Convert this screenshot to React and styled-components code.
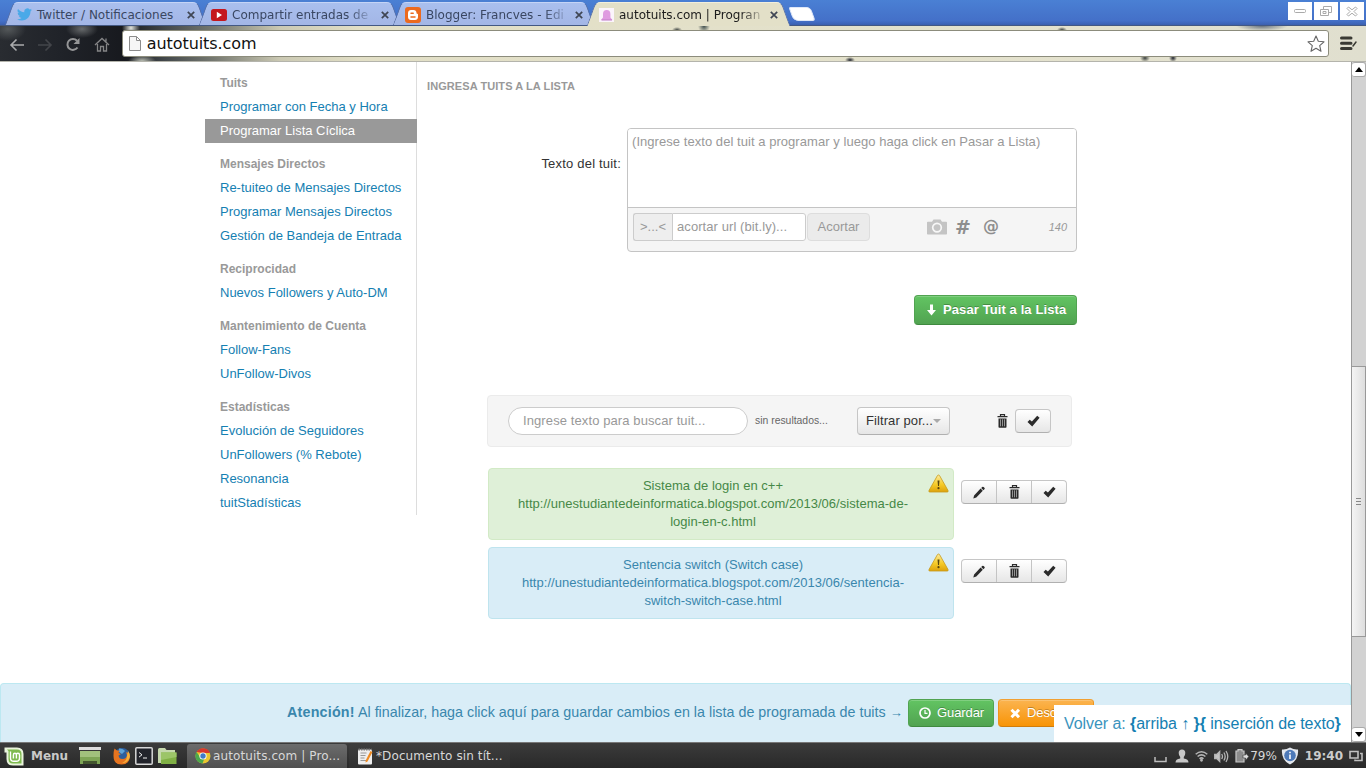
import React from 'react';
import styled, { createGlobalStyle, css } from 'styled-components';

const GlobalStyle = createGlobalStyle`
  * {
    box-sizing: border-box;
  }

  body {
    margin: 0;
    overflow: hidden;
    background: #fff;
    font-family: "Liberation Sans", Arial, sans-serif;
    font-size: 13px;
    line-height: 18px;
    color: #333;
  }

  svg {
    display: block;
    flex: none;
  }
`;

const Screen = styled.div`
  width: 1366px;
  height: 768px;
  display: flex;
  flex-direction: column;
  overflow: hidden;
`;

/* ---------- browser window ---------- */

const TabStrip = styled.div`
  flex: none;
  height: 26px;
  display: flex;
  align-items: flex-start;
  padding: 2px 0 0 8px;
  background: linear-gradient(#4a80d4, #4470c8 80%, #3c62b4 94%, #46546c);
  font-family: "DejaVu Sans", sans-serif;
`;

const Tab = styled.div`
  position: relative;
  isolation: isolate;
  flex: none;
  width: ${(p) => p.$width || 194}px;
  height: 24px;
  display: flex;
  align-items: center;
  padding: 1px 7px 0 9px;
  font-size: 12px;
  color: ${(p) => (p.$active ? '#1c1c1c' : '#3a4762')};
  z-index: ${(p) => (p.$active ? 3 : 1)};

  &:before,
  &:after {
    content: '';
    position: absolute;
    z-index: -1;
    top: 0;
    bottom: ${(p) => (p.$active ? 0 : 1)}px;
    background: ${(p) => (p.$active ? '#e3e0c8' : 'linear-gradient(#a9bfee, #a3b6e6)')};
    border-top: 1px solid ${(p) => (p.$active ? '#f2efdc' : '#c4d4f6')};
  }

  &:before {
    left: 1px;
    right: 30%;
    border-left: 1px solid #5a70a4;
    border-top-left-radius: 5px;
    transform: skewX(-20deg);
  }

  &:after {
    left: 30%;
    right: 0;
    border-right: 1px solid #5a70a4;
    border-top-right-radius: 5px;
    transform: skewX(20deg);
  }
`;

const TabTitle = styled.span`
  flex: none;
  margin: 0 auto 0 5px;
  white-space: nowrap;
  mask-image: ${(p) => (p.$fade ? 'linear-gradient(90deg, #000 86%, rgba(0, 0, 0, 0.25))' : 'none')};
`;

const NewTab = styled.div`
  width: 22px;
  height: 14px;
  margin: 5px 0 0 6px;
  background: #fff;
  border: 1px solid #dfe8f8;
  border-radius: 2px 4px 3px 5px;
  transform: skewX(20deg);
`;

const WindowButtons = styled.div`
  display: flex;
  gap: 2px;
  margin-left: auto;
  padding-right: 2px;
`;

const WindowButton = styled.div`
  width: 24px;
  height: 18px;
  display: flex;
  align-items: center;
  justify-content: center;
  background: #fff;
`;

const Toolbar = styled.div`
  flex: none;
  height: 36px;
  display: flex;
  align-items: center;
  padding: 0 7px 0 9px;
  border-bottom: 1px solid #b4b4ac;
  background:
    radial-gradient(ellipse 16px 9px at 82px 3px, #66696b, transparent),
    radial-gradient(ellipse 18px 12px at 8px 3px, #54585a, transparent),
    radial-gradient(ellipse 9px 8px at 131px 2px, #e3e5df, transparent),
    radial-gradient(ellipse 14px 6px at 142px 35px, #b9bdb2, transparent),
    radial-gradient(ellipse 26px 5px at 1262px 0, #67727e, transparent),
    radial-gradient(ellipse 6px 7px at 704px 0, #3e4c4c, transparent),
    radial-gradient(ellipse 5px 3px at 677px 4px, #3b4140, transparent),
    radial-gradient(ellipse 5px 3px at 1062px 4px, #3b4140, transparent),
    radial-gradient(ellipse 5px 3px at 850px 34px, #20242e, transparent),
    radial-gradient(ellipse 5px 4px at 1145px 32px, #3b4140, transparent),
    radial-gradient(ellipse 4px 4px at 1173px 32px, #20242e, transparent),
    linear-gradient(90deg, #292c31 0, #202329 60px, #17191e 125px, #43484b 165px, #777a72 215px, #cbc9b3 280px, #e2dfc6 360px, #e4e2ce 1100px, #e0dfcf 1366px);
`;

const NavButton = styled.div`
  width: 28px;
  display: flex;
  padding-top: 2px;
  margin-right: ${(p) => p.$gap || 0}px;
  opacity: ${(p) => (p.$dim ? 0.18 : 0.75)};
`;

const AddressBar = styled.div`
  width: 1209px;
  height: 27px;
  display: flex;
  align-items: center;
  padding: 0 3px 0 6px;
  background: #fff;
  border: 1px solid #8c8c7c;
  border-radius: 3px;
  font: 16px/24px "DejaVu Sans", sans-serif;
  letter-spacing: -0.08px;
  color: #111;
`;

const Url = styled.span`
  flex: 1;
  margin-left: 6px;
`;

const Burger = styled.div`
  margin-left: 10px;
`;

/* ---------- page ---------- */

const Viewport = styled.div`
  position: relative;
  flex: none;
  height: 680px;
  display: flex;
  background: #fff;
`;

const Page = styled.div`
  width: 1351px;
  display: flex;
  flex-direction: column;
`;

const Columns = styled.div`
  flex: 1;
  display: flex;
  align-items: flex-start;
  padding-left: 205px;
`;

const Sidebar = styled.nav`
  width: 212px;
  flex: none;
  padding-top: 9px;
  border-right: 1px solid #ddd;
`;

const NavGroup = styled.div`
  & + & {
    margin-top: 9px;
  }
`;

const NavHeader = styled.div`
  padding: 3px 15px;
  font-size: 12px;
  font-weight: bold;
  color: #999;
`;

const NavLink = styled.a`
  display: block;
  padding: 3px 15px;
  color: #1580b2;
  white-space: nowrap;

  ${(p) =>
    p.$active &&
    css`
      margin-right: -1px;
      background: #999;
      color: #fff;
    `}
`;

const Main = styled.main`
  width: 660px;
  padding: 15px 0 0 10px;
`;

const SectionTitle = styled.h6`
  margin: 0;
  font-size: 11px;
  line-height: 18px;
  font-weight: bold;
  letter-spacing: 0.08px;
  color: #999;
  text-transform: uppercase;
`;

const FormRow = styled.div`
  display: flex;
  margin-top: 33px;
`;

const Label = styled.label`
  width: 194px;
  margin-right: 6px;
  padding-top: 27px;
  text-align: right;
  letter-spacing: 0.2px;
`;

const Composer = styled.div`
  width: 450px;
  height: 124px;
  border: 1px solid #c4c4c4;
  border-radius: 4px;
  background: #f5f5f5;
  overflow: hidden;
`;

const TweetText = styled.div`
  height: 79px;
  padding: 4px;
  background: #fff;
  border-bottom: 1px solid #c4c4c4;
  color: #999;
  letter-spacing: 0.05px;
`;

const ComposerTools = styled.div`
  display: flex;
  align-items: center;
  padding: 5px 9px 0 5px;
  color: #999;
`;

const AddOn = styled.span`
  width: 39px;
  height: 28px;
  padding: 4px 5px;
  border: 1px solid #ccc;
  border-right: 0;
  border-radius: 3px 0 0 3px;
  background: #eee;
  text-align: center;
`;

const UrlInput = styled.span`
  width: 134px;
  height: 28px;
  padding: 4px;
  border: 1px solid #ccc;
  border-radius: 0 3px 3px 0;
  background: #fff;
  letter-spacing: 0.08px;
`;

const DisabledButton = styled.span`
  width: 63px;
  height: 28px;
  margin-left: 1px;
  padding: 4px 0;
  border: 1px solid #ddd;
  border-radius: 4px;
  background: #ebebeb;
  text-align: center;
`;

const ToolIcons = styled.div`
  display: flex;
  align-items: center;
  margin-left: 57px;
`;

const ToolGlyph = styled.b`
  margin-left: ${(p) => p.$gap}px;
  font: bold ${(p) => p.$size}px/20px "DejaVu Sans", sans-serif;
  color: #8e8e8e;
`;

const Counter = styled.em`
  margin-left: auto;
  font-size: 11px;
`;

const buttonColors = {
  green: css`
    background: linear-gradient(#62c462, #51a351);
    border-color: #51a351 #51a351 #3f8a3f;
  `,
  orange: css`
    background: linear-gradient(#fbb450, #f89406);
    border-color: #f0a033 #f0941a #d07d0c;
  `,
};

const Button = styled.button`
  flex: none;
  display: flex;
  align-items: center;
  width: ${(p) => p.$width}px;
  height: ${(p) => p.$height || 28}px;
  gap: ${(p) => p.$gap || 6}px;
  padding: 0 ${(p) => p.$pad || 10}px;
  border: 1px solid;
  border-radius: 4px;
  font: ${(p) => (p.$bold ? 'bold' : 'normal')} 13px/18px "Liberation Sans", Arial, sans-serif;
  letter-spacing: ${(p) => (p.$bold ? 0.1 : -0.1)}px;
  color: #fff;
  white-space: nowrap;
  text-shadow: 0 -1px 0 rgba(0, 0, 0, 0.25);
  box-shadow: inset 0 1px 0 rgba(255, 255, 255, 0.2);
  ${(p) => buttonColors[p.$color]}
`;

const SubmitRow = styled.div`
  display: flex;
  justify-content: flex-end;
  margin-top: 43px;
`;

const FilterBar = styled.div`
  width: 585px;
  height: 52px;
  display: flex;
  align-items: center;
  margin: 70px 0 0 60px;
  padding: 0 20px;
  border: 1px solid #ebebeb;
  border-radius: 4px;
  background: #f5f5f5;
`;

const SearchInput = styled.div`
  width: 240px;
  height: 28px;
  padding: 4px 14px;
  border: 1px solid #ccc;
  border-radius: 14px;
  background: #fff;
  color: #999;
  letter-spacing: 0.1px;
`;

const ResultNote = styled.small`
  width: 109px;
  padding-left: 7px;
  font-size: 10.4px;
  color: #666;
`;

const lightButton = css`
  display: flex;
  align-items: center;
  justify-content: center;
  border: 1px solid #c6c6c6;
  border-bottom-color: #b0b0b0;
  border-radius: 4px;
  background: linear-gradient(#fff, #e6e6e6);
`;

const FilterSelect = styled.div`
  ${lightButton}
  width: 93px;
  height: 28px;
  letter-spacing: 0.08px;
`;

const Caret = styled.i`
  border: 4px solid transparent;
  border-top-color: #aaa;
  border-bottom: 0;
`;

const BulkActions = styled.div`
  display: flex;
  align-items: center;
  gap: 7px;
  margin-left: auto;
`;

const CheckButton = styled.div`
  ${lightButton}
  width: 36px;
  height: 24px;
`;

const TweetList = styled.div`
  display: flex;
  flex-direction: column;
  gap: 7px;
  margin: 21px 0 0 61px;
`;

const TweetRow = styled.div`
  display: flex;
  align-items: flex-start;
`;

const TweetCard = styled.div`
  position: relative;
  width: 466px;
  height: 72px;
  padding: 8px 35px 8px 19px;
  border: 1px solid ${(p) => (p.$tone === 'success' ? '#d2eac6' : '#bfe4ee')};
  border-radius: 4px;
  background: ${(p) => (p.$tone === 'success' ? '#dff0d8' : '#d9edf7')};
  color: ${(p) => (p.$tone === 'success' ? '#468847' : '#3a87ad')};
  text-align: center;
  white-space: pre;
  letter-spacing: 0.03px;
`;

const WarningBadge = styled.span`
  position: absolute;
  top: 5px;
  right: 4px;
`;

const RowActions = styled.div`
  ${lightButton}
  width: 106px;
  height: 24px;
  margin: 12px 0 0 7px;
`;

const RowAction = styled.span`
  flex: 1;
  height: 22px;
  display: flex;
  align-items: center;
  justify-content: center;

  & + & {
    border-left: 1px solid #c4c4c4;
  }
`;

const SaveBar = styled.div`
  flex: none;
  height: 59px;
  display: flex;
  align-items: center;
  padding-left: 286px;
  border: 1px solid #bce8f1;
  border-bottom: 0;
  border-radius: 4px 4px 0 0;
  background: #d9edf7;
  color: #3a87ad;
`;

const SaveText = styled.span`
  width: 621px;
  padding-bottom: 2px;
  font-size: 14.3px;
  letter-spacing: 0.01px;
  white-space: nowrap;

  b {
    letter-spacing: 0.2px;
  }

  small {
    font-size: 13px;
  }
`;

const SaveActions = styled.div`
  display: flex;
  gap: 4px;
`;

const BackLinks = styled.div`
  position: absolute;
  right: 15px;
  bottom: 0;
  width: 297px;
  height: 37px;
  padding-left: 10px;
  background: #fff;
  font-size: 16px;
  line-height: 37px;
  letter-spacing: -0.06px;
  color: #3a93bd;
  white-space: nowrap;

  a {
    color: #1580b2;
  }
`;

const Scrollbar = styled.div`
  width: 15px;
  display: flex;
  flex-direction: column;
  background: #d2d2d2;
  border-left: 1px solid #999;
`;

const ScrollButton = styled.div`
  height: 15px;
  display: flex;
  align-items: center;
  justify-content: center;
  border: 1px solid #aaa;
  border-left: 0;
  border-radius: 3px;
  background: #fff;
`;

const ScrollThumb = styled.div`
  height: 271px;
  margin: 289px 0 auto;
  display: flex;
  flex-direction: column;
  justify-content: center;
  align-items: center;
  gap: 2px;
  border: 1px solid #999;
  border-left: 0;
  background: linear-gradient(90deg, #f4f4f4, #dedede);

  i {
    width: 5px;
    height: 1px;
    background: #888;
  }
`;

/* ---------- desktop panel ---------- */

const Panel = styled.div`
  flex: 1;
  display: flex;
  align-items: center;
  padding: 1px 3px 0 4px;
  border-top: 1px solid #777;
  background: linear-gradient(#3b3b3b, #292929);
  font: 12px/24px "DejaVu Sans", sans-serif;
  color: #d8d8d8;
`;

const MenuLabel = styled.b`
  width: 48px;
  margin-left: 7px;
  font-size: 12px;
  color: #c9c9c9;
`;

const Launchers = styled.div`
  display: flex;
  align-items: center;
  gap: 4px;
  margin-left: 12px;
`;

const Task = styled.div`
  width: ${(p) => p.$width}px;
  height: 24px;
  display: flex;
  align-items: center;
  gap: 2px;
  padding-left: ${(p) => p.$pad}px;
  margin-left: ${(p) => p.$gap}px;
  border-radius: 3px 3px 0 0;
  white-space: nowrap;
  letter-spacing: 0.1px;
  background: ${(p) => (p.$active ? 'linear-gradient(#6c6c6c, #505050)' : 'linear-gradient(#3d3d3d, #303030)')};
`;

const Tray = styled.div`
  display: flex;
  align-items: center;
  margin-left: auto;
  gap: 6px;
`;

const Battery = styled.div`
  display: flex;
  align-items: center;
  gap: 1px;
  margin-right: -2px;
`;

const Clock = styled.b`
  font-size: 12px;
  color: #ccc;
`;

/* ---------- icons ---------- */

const CloseX = () => (
  <svg width="8" height="8" viewBox="0 0 8 8" stroke="#3f4654" strokeWidth="1.7">
    <path d="M0.8 0.8l6.4 6.4M7.2 0.8L0.8 7.2" />
  </svg>
);

const TwitterIcon = () => (
  <svg width="15" height="15" viewBox="0 0 24 24" fill="#4aa9e8">
    <path d="M23.95 4.57a10 10 0 0 1-2.82.77 4.96 4.96 0 0 0 2.16-2.72c-.95.55-2 .95-3.13 1.18a4.92 4.92 0 0 0-8.38 4.48C7.69 8.1 4.07 6.13 1.64 3.16a4.9 4.9 0 0 0 1.52 6.57 4.9 4.9 0 0 1-2.23-.61v.06a4.92 4.92 0 0 0 3.95 4.83 5 5 0 0 1-2.21.08 4.94 4.94 0 0 0 4.6 3.42A9.87 9.87 0 0 1 0 19.54a13.99 13.99 0 0 0 7.55 2.21c9.05 0 14-7.5 14-13.98 0-.21 0-.42-.02-.63a9.94 9.94 0 0 0 2.42-2.57z" />
  </svg>
);

const YoutubeIcon = () => (
  <svg width="16" height="12" viewBox="0 0 16 12">
    <rect width="16" height="12" rx="2.5" fill="#c4171d" />
    <path d="M5.8 2.8v6.4L11 6z" fill="#fff" />
  </svg>
);

const BloggerIcon = () => (
  <svg width="16" height="16" viewBox="0 0 16 16">
    <rect width="16" height="16" rx="3" fill="#ec6a1e" />
    <path
      d="M6 3h2.5C10.3 3 11.5 4.2 11.5 5.7c0 .8.3 1 .8 1 .5 0 .7.3.7.8V10c0 1.7-1.3 3-3 3H6c-1.7 0-3-1.3-3-3V6c0-1.7 1.3-3 3-3z"
      fill="#fff"
    />
    <path d="M6 6.200h2.200M6 9.900h4" stroke="#ec6a1e" strokeWidth="1.5" strokeLinecap="round" />
  </svg>
);

const AutotuitsIcon = () => (
  <svg width="15" height="14" viewBox="0 0 15 14">
    <rect width="15" height="14" fill="#fbf4fb" />
    <path d="M4 9.500V6a3.700 4 0 0 1 7.400 0V9.500l2 2.500H2z" fill="#df9be0" />
    <path d="M2.500 12h10.500" stroke="#c07cc8" />
  </svg>
);

const BackIcon = () => (
  <svg width="16" height="14" viewBox="0 0 16 14" fill="none" stroke="#d6d6d6" strokeWidth="1.6">
    <path d="M15 7H2.500M7.500 1.500L2 7l5.500 5.500" />
  </svg>
);

const ForwardIcon = () => (
  <svg width="16" height="14" viewBox="0 0 16 14" fill="none" stroke="#d6d6d6" strokeWidth="1.6">
    <path d="M1 7h12.500M8.500 1.500L14 7l-5.500 5.500" />
  </svg>
);

const ReloadIcon = () => (
  <svg width="16" height="15" viewBox="0 0 16 15" fill="none" stroke="#bcbcbc" strokeWidth="2">
    <path d="M12.500 10.500A5.500 5.500 0 1 1 12 3.700" />
    <path d="M14.500 1v6H8.500z" fill="#bcbcbc" stroke="none" />
  </svg>
);

const HomeIcon = () => (
  <svg width="16" height="15" viewBox="0 0 16 15" fill="none" stroke="#a8a8a8" strokeWidth="1.3">
    <path d="M1 8l7-6.500L15 8M3.500 7v7h3V9.500h3V14h3V7M12 4.500V1.500" />
  </svg>
);

const PageIcon = () => (
  <svg width="12" height="15" viewBox="0 0 12 15" fill="#f6f6f6" stroke="#8c8c8c">
    <path d="M0.500 0.500h7l4 4v10h-11zM7.500 0.500v4h4" />
  </svg>
);

const StarIcon = () => (
  <svg width="18" height="18" viewBox="0 0 18 18" fill="#fff" stroke="#666" strokeWidth="1.1" strokeLinejoin="round">
    <path d="M9 1l2.300 5.300 5.700.5-4.300 3.800 1.300 5.700L9 13.300l-5 3 1.300-5.700L1 6.800l5.700-.5z" />
  </svg>
);

const TrashIcon = () => (
  <svg width="11" height="14" viewBox="0 0 11 14">
    <path d="M3.500 2.500V0.600h4v1.900M0.500 2.700h10" fill="none" stroke="#2b2b2b" strokeWidth="1.2" />
    <path d="M1.500 4.500h8V13q0 .7-.7.700H2.200q-.7 0-.7-.700z" fill="#2b2b2b" />
    <path d="M3.500 5.300v7M5.500 5.300v7M7.500 5.300v7" stroke="#b0b0b0" strokeWidth="0.800" />
  </svg>
);

const PencilIcon = () => (
  <svg width="12" height="13" viewBox="0 0 12 13" fill="#2b2b2b">
    <path d="M0.300 12.600l.8-3.200L7.600 2.600l2.200 2.200-6.500 6.700zM8.200 2l1-1q.7-.7 1.400 0l.8.800q.7.700 0 1.400l-1 1z" />
  </svg>
);

const CheckIcon = () => (
  <svg width="13" height="12" viewBox="0 0 13 12" fill="#2b2b2b">
    <path d="M0.500 7l2.200-2.300 2.200 1.900L10.200 0.700l2.400 2L5.200 11.500z" />
  </svg>
);

const WarningIcon = () => (
  <svg width="21" height="19" viewBox="0 0 21 19">
    <defs>
      <linearGradient id="warn" x1="0" y1="0" x2="0" y2="1">
        <stop offset="0" stopColor="#fbeaa0" />
        <stop offset="0.55" stopColor="#f6cb28" />
        <stop offset="1" stopColor="#dda20c" />
      </linearGradient>
    </defs>
    <path d="M10.500 1q.8 0 1.300 1L20 16.500q.6 1.500-.8 1.500H1.800Q.4 18 1 16.500L9.200 2q.5-1 1.300-1z" fill="url(#warn)" stroke="#c79a1c" strokeWidth="0.8" />
    <path d="M9.500 6.500h2l-.5 5.500h-1z" fill="#5a460c" />
    <circle cx="10.5" cy="14.2" r="1.1" fill="#5a460c" />
  </svg>
);

const CameraIcon = () => (
  <svg width="20" height="16" viewBox="0 0 20 16">
    <path d="M0.800 2.700H5L6.500 0.500h7L15 2.700h4.200q.8 0 .8.800v11.200q0 .8-.8.800H.8q-.8 0-.8-.8V3.500q0-.8.8-.8z" fill="#c4c4c4" />
    <circle cx="10" cy="8.600" r="4.300" fill="#c4c4c4" stroke="#f7f7f7" strokeWidth="1.7" />
  </svg>
);

const ArrowDownIcon = () => (
  <svg width="9" height="12" viewBox="0 0 9 12" fill="#fff">
    <path d="M3 0.500h3V6h3L4.500 11.500 0 6h3z" />
  </svg>
);

const ClockIcon = () => (
  <svg width="12" height="12" viewBox="0 0 12 12" fill="none" stroke="#fff">
    <circle cx="6" cy="6" r="5" strokeWidth="1.7" />
    <path d="M6 3v3.300h2.500" strokeWidth="1.2" />
  </svg>
);

const RemoveIcon = () => (
  <svg width="12" height="11" viewBox="0 0 12 11" stroke="#fff" strokeWidth="3">
    <path d="M2.500 1.700l7.500 7.600M10 1.700L2.500 9.300" />
  </svg>
);

const MintIcon = () => (
  <svg width="20" height="19" viewBox="0 0 20 19">
    <path d="M0.500 0.500H13Q19.500 0.500 19.500 7v11.500H9Q2.500 18.500 2.500 12V5.500h-2z" fill="#e9f4dc" />
    <path d="M3 2.500h10q4.500 0 4.500 4.500v9.500H9q-4.500 0-4.500-4.500V4z" fill="#7fba4f" />
    <path d="M6.500 4.500V11q0 3.300 3.300 3.300h2.400q3.300 0 3.300-3.300V8q0-1.700-1.600-1.700T12.400 8v3.500M12.400 8q0-1.700-1.500-1.700T9.400 8v3.500" fill="none" stroke="#fff" strokeWidth="1.4" />
  </svg>
);

const DesktopIcon = () => (
  <svg width="22" height="18" viewBox="0 0 22 18">
    <rect width="22" height="3" fill="#ddd" />
    <rect x="1" y="4" width="20" height="13" fill="#7ea555" />
    <rect x="1" y="4" width="20" height="6" fill="#a1c17c" />
    <path d="M4 17v-3h14v3" fill="#44562f" />
  </svg>
);

const FirefoxIcon = () => (
  <svg width="18" height="18" viewBox="0 0 18 18">
    <circle cx="9" cy="9" r="8" fill="#2d5f9e" />
    <path d="M6 1.500q4-.5 6 2.500l-3 3-3-2z" fill="#5da3d8" />
    <path d="M1.500 1.500l2.500 2 2.500 0-1 2.500 2.500 1-2.500 1.500Q6 12 9.500 12q4 0 4.500-4l-1-3q3 1 4 4-.5 8.500-8.500 8.500T.5 9Q.5 4 1.500 1.500z" fill="#e6741f" />
    <path d="M15 4q2 2 1.800 6Q15 16 9 16q5-2 5-7z" fill="#f4b13a" />
  </svg>
);

const TerminalIcon = () => (
  <svg width="18" height="18" viewBox="0 0 18 18">
    <rect x="0.8" y="0.8" width="16.4" height="16.4" rx="1" fill="#22242b" stroke="#d8d8d8" strokeWidth="1.5" />
    <path d="M4 5.500l3 2.300-3 2.300M8 11h4" fill="none" stroke="#eee" />
  </svg>
);

const FolderIcon = () => (
  <svg width="20" height="18" viewBox="0 0 20 18">
    <path d="M1 16V2.500Q1 1 2.500 1H8l1.500 2H18v13z" fill="#c5d8ad" />
    <path d="M4 5.500h15.500V17H4z" fill="#80b045" />
    <path d="M4 5.500h15.500V10L4 13z" fill="#9cc568" />
  </svg>
);

const ChromeIcon = () => (
  <svg width="16" height="16" viewBox="0 0 16 16">
    <circle cx="8" cy="8" r="7.500" fill="#e9c52f" />
    <path d="M1.500 4A7.500 7.500 0 0 1 15 5H8z" fill="#d8382c" />
    <path d="M1.500 4A7.500 7.500 0 0 0 7.500 15.500L9.500 10 5 9z" fill="#4ba84c" />
    <circle cx="8" cy="8" r="3.600" fill="#fff" />
    <circle cx="8" cy="8" r="2.700" fill="#3f7bc8" />
  </svg>
);

const EditorIcon = () => (
  <svg width="17" height="17" viewBox="0 0 17 17">
    <rect x="1" y="1.500" width="14" height="15" rx="1" fill="#eee" />
    <path d="M1.500 1.500h13" stroke="#777" strokeWidth="2" strokeDasharray="1.500 1" />
    <path d="M3.500 5h6M3.500 7.500h5M3.500 10h4M3.500 12.500h6" stroke="#999" />
    <path d="M13.500 3l2 1-5 9.500-2 1 .3-2.300z" fill="#ee8a22" />
  </svg>
);

const KeyboardTrayIcon = () => (
  <svg width="15" height="13" viewBox="0 0 15 13" fill="none" stroke="#bdbdbd" strokeWidth="1.5">
    <path d="M1 7v4.500h11V7" />
  </svg>
);

const UserIcon = () => (
  <svg width="14" height="14" viewBox="0 0 14 14" fill="#c8c8c8">
    <path d="M7 0.500q3.300 0 3.300 3.500 0 2.500-1.500 4v1.500q4.700.7 4.700 4H.5q0-3.300 4.700-4V8Q3.700 6.500 3.700 4 3.700 0.500 7 0.500z" />
  </svg>
);

const WifiIcon = () => (
  <svg width="13" height="12" viewBox="0 0 13 12" fill="none" stroke="#b5b5b5" strokeWidth="1.5">
    <path d="M0.700 4.200q5.800-5 11.600 0M2.600 6.500q3.900-3.300 7.800 0M4.500 8.700q2-1.700 4 0" />
    <circle cx="6.500" cy="10.300" r="0.700" />
  </svg>
);

const VolumeIcon = () => (
  <svg width="15" height="13" viewBox="0 0 15 13" fill="none" stroke="#b5b5b5" strokeWidth="1.3">
    <path d="M0.700 4.500h2l3-3v10l-3-3h-2z" fill="#c4c4c4" />
    <path d="M7.700 4q1.500 2.500 0 5M9.900 2.500q2.500 4 0 8M12 1q3.500 5.500 0 11" />
  </svg>
);

const BatteryIcon = () => (
  <svg width="14" height="14" viewBox="0 0 14 14">
    <path d="M3 2V0.700h4V2h2v11H1V2z" fill="#8c8c8c" stroke="#c8c8c8" strokeWidth="1.2" />
    <path d="M10.500 4v2H8v3h2.500v2.500L13.800 7.500z" fill="#ddd" stroke="#333" strokeWidth="0.6" />
  </svg>
);

const ShieldIcon = () => (
  <svg width="18" height="18" viewBox="0 0 18 18">
    <path d="M9 0.500q4 2.500 8 2Q18 13 9 17.500 0 13 1 2.500q4 .5 8-2z" fill="#e4e8ee" />
    <circle cx="9" cy="8.500" r="5.800" fill="#4d79b8" />
    <path d="M9 7.500V12M9 4.700v1.500" stroke="#fff" strokeWidth="1.6" />
  </svg>
);

const WindowsIcon = () => (
  <svg width="14" height="12" viewBox="0 0 14 12" fill="none" stroke="#c0c0c0" strokeWidth="1.6">
    <path d="M1 1.500h8v6.500H1zM11 3.500h2v7H6V9.500" />
  </svg>
);

const navGroups = [
  { title: 'Tuits', links: ['Programar con Fecha y Hora', 'Programar Lista Cíclica'] },
  {
    title: 'Mensajes Directos',
    links: ['Re-tuiteo de Mensajes Directos', 'Programar Mensajes Directos', 'Gestión de Bandeja de Entrada'],
  },
  { title: 'Reciprocidad', links: ['Nuevos Followers y Auto-DM'] },
  { title: 'Mantenimiento de Cuenta', links: ['Follow-Fans', 'UnFollow-Divos'] },
  {
    title: 'Estadísticas',
    links: ['Evolución de Seguidores', 'UnFollowers (% Rebote)', 'Resonancia', 'tuitStadísticas'],
  },
];

const tweets = [
  {
    tone: 'success',
    text: 'Sistema de login en c++\nhttp://unestudiantedeinformatica.blogspot.com/2013/06/sistema-de-\nlogin-en-c.html',
  },
  {
    tone: 'info',
    text: 'Sentencia switch (Switch case)\nhttp://unestudiantedeinformatica.blogspot.com/2013/06/sentencia-\nswitch-switch-case.html',
  },
];

const BrowserTabs = () => (
  <TabStrip>
    <Tab>
      <TwitterIcon />
      <TabTitle>Twitter / Notificaciones</TabTitle>
      <CloseX />
    </Tab>
    <Tab>
      <YoutubeIcon />
      <TabTitle $fade>Compartir entradas de</TabTitle>
      <CloseX />
    </Tab>
    <Tab>
      <BloggerIcon />
      <TabTitle $fade>Blogger: Francves - Edi</TabTitle>
      <CloseX />
    </Tab>
    <Tab $active $width={195}>
      <AutotuitsIcon />
      <TabTitle $fade>autotuits.com | Progran</TabTitle>
      <CloseX />
    </Tab>
    <NewTab />
    <WindowButtons>
      <WindowButton>
        <svg width="12" height="4" viewBox="0 0 12 4" fill="none" stroke="#aaa">
          <rect x="0.5" y="0.5" width="11" height="3" rx="1" />
        </svg>
      </WindowButton>
      <WindowButton>
        <svg width="12" height="11" viewBox="0 0 12 11" fill="none" stroke="#aaa">
          <path d="M3.500 3.500v-3h8v6h-3M0.500 3.500h8v6h-8zM3 5.500h3v2H3z" />
        </svg>
      </WindowButton>
      <WindowButton>
        <svg width="12" height="11" viewBox="0 0 12 11" fill="#fff" stroke="#aaa">
          <path d="M1 2.500L2.500 1 6 3.800 9.500 1 11 2.500 8 5.500l3 3L9.500 10 6 7.200 2.500 10 1 8.500l3-3z" />
        </svg>
      </WindowButton>
    </WindowButtons>
  </TabStrip>
);

const BrowserToolbar = () => (
  <Toolbar>
    <NavButton><BackIcon /></NavButton>
    <NavButton $dim><ForwardIcon /></NavButton>
    <NavButton $gap={1}><ReloadIcon /></NavButton>
    <NavButton><HomeIcon /></NavButton>
    <AddressBar>
      <PageIcon />
      <Url>autotuits.com</Url>
      <StarIcon />
    </AddressBar>
    <Burger>
      <svg width="20" height="15" viewBox="0 0 20 15" stroke="#3a3a34" strokeWidth="3" strokeLinecap="round">
        <path d="M2.500 2h9.500M2.500 7.200h9.500M2.500 12.400h9.500" />
        <path d="M14 10l3-4" strokeWidth="1.5" />
      </svg>
    </Burger>
  </Toolbar>
);

const TweetForm = () => (
  <>
    <SectionTitle>Ingresa tuits a la lista</SectionTitle>
    <FormRow>
      <Label>Texto del tuit:</Label>
      <Composer>
        <TweetText>(Ingrese texto del tuit a programar y luego haga click en Pasar a Lista)</TweetText>
        <ComposerTools>
          <AddOn>&gt;...&lt;</AddOn>
          <UrlInput>acortar url (bit.ly)...</UrlInput>
          <DisabledButton>Acortar</DisabledButton>
          <ToolIcons>
            <CameraIcon />
            <ToolGlyph $gap={8} $size={19}>#</ToolGlyph>
            <ToolGlyph $gap={12} $size={16}>@</ToolGlyph>
          </ToolIcons>
          <Counter>140</Counter>
        </ComposerTools>
      </Composer>
    </FormRow>
    <SubmitRow>
      <Button $color="green" $width={163} $height={30} $gap={7} $pad={12} $bold>
        <ArrowDownIcon />
        Pasar Tuit a la Lista
      </Button>
    </SubmitRow>
  </>
);

const App = () => {
  return (
    <Screen>
      <GlobalStyle />
      <BrowserTabs />
      <BrowserToolbar />

      <Viewport>
        <Page>
          <Columns>
            <Sidebar>
              {navGroups.map((group) => (
                <NavGroup key={group.title}>
                  <NavHeader>{group.title}</NavHeader>
                  {group.links.map((link) => (
                    <NavLink key={link} $active={link === 'Programar Lista Cíclica'}>
                      {link}
                    </NavLink>
                  ))}
                </NavGroup>
              ))}
            </Sidebar>

            <Main>
              <TweetForm />

              <FilterBar>
                <SearchInput>Ingrese texto para buscar tuit...</SearchInput>
                <ResultNote>sin resultados...</ResultNote>
                <FilterSelect>
                  Filtrar por...
                  <Caret />
                </FilterSelect>
                <BulkActions>
                  <TrashIcon />
                  <CheckButton><CheckIcon /></CheckButton>
                </BulkActions>
              </FilterBar>

              <TweetList>
                {tweets.map((tweet) => (
                  <TweetRow key={tweet.tone}>
                    <TweetCard $tone={tweet.tone}>
                      {tweet.text}
                      <WarningBadge><WarningIcon /></WarningBadge>
                    </TweetCard>
                    <RowActions>
                      <RowAction><PencilIcon /></RowAction>
                      <RowAction><TrashIcon /></RowAction>
                      <RowAction><CheckIcon /></RowAction>
                    </RowActions>
                  </TweetRow>
                ))}
              </TweetList>
            </Main>
          </Columns>

          <SaveBar>
            <SaveText>
              <b>Atención!</b> Al finalizar, haga click aquí para guardar cambios en la lista de programada de tuits <small>→</small>
            </SaveText>
            <SaveActions>
              <Button $color="green" $width={86}>
                <ClockIcon />
                Guardar
              </Button>
              <Button $color="orange" $width={96}>
                <RemoveIcon />
                Descartar
              </Button>
            </SaveActions>
          </SaveBar>
        </Page>

        <BackLinks>
          Volver a: <a><b>{'{'}</b>arriba ↑ <b>{'}'}</b></a><a><b>{'{'}</b> inserción de texto<b>{'}'}</b></a>
        </BackLinks>

        <Scrollbar>
          <ScrollButton>
            <svg width="8" height="5" viewBox="0 0 8 5"><path d="M4 0l4 5H0z" /></svg>
          </ScrollButton>
          <ScrollThumb><i /><i /><i /></ScrollThumb>
          <ScrollButton>
            <svg width="8" height="5" viewBox="0 0 8 5"><path d="M4 5l4-5H0z" /></svg>
          </ScrollButton>
        </Scrollbar>
      </Viewport>

      <Panel>
        <MintIcon />
        <MenuLabel>Menu</MenuLabel>
        <DesktopIcon />
        <Launchers>
          <FirefoxIcon />
          <TerminalIcon />
          <FolderIcon />
        </Launchers>
        <Task $active $width={160} $pad={8} $gap={10}>
          <ChromeIcon />
          autotuits.com | Pro...
        </Task>
        <Task $width={161} $pad={8} $gap={2}>
          <EditorIcon />
          *Documento sin tít...
        </Task>
        <Tray>
          <KeyboardTrayIcon />
          <UserIcon />
          <WifiIcon />
          <VolumeIcon />
          <Battery>
            <BatteryIcon />
            79%
          </Battery>
          <ShieldIcon />
          <Clock>19:40</Clock>
          <WindowsIcon />
        </Tray>
      </Panel>
    </Screen>
  );
};

export default App;
